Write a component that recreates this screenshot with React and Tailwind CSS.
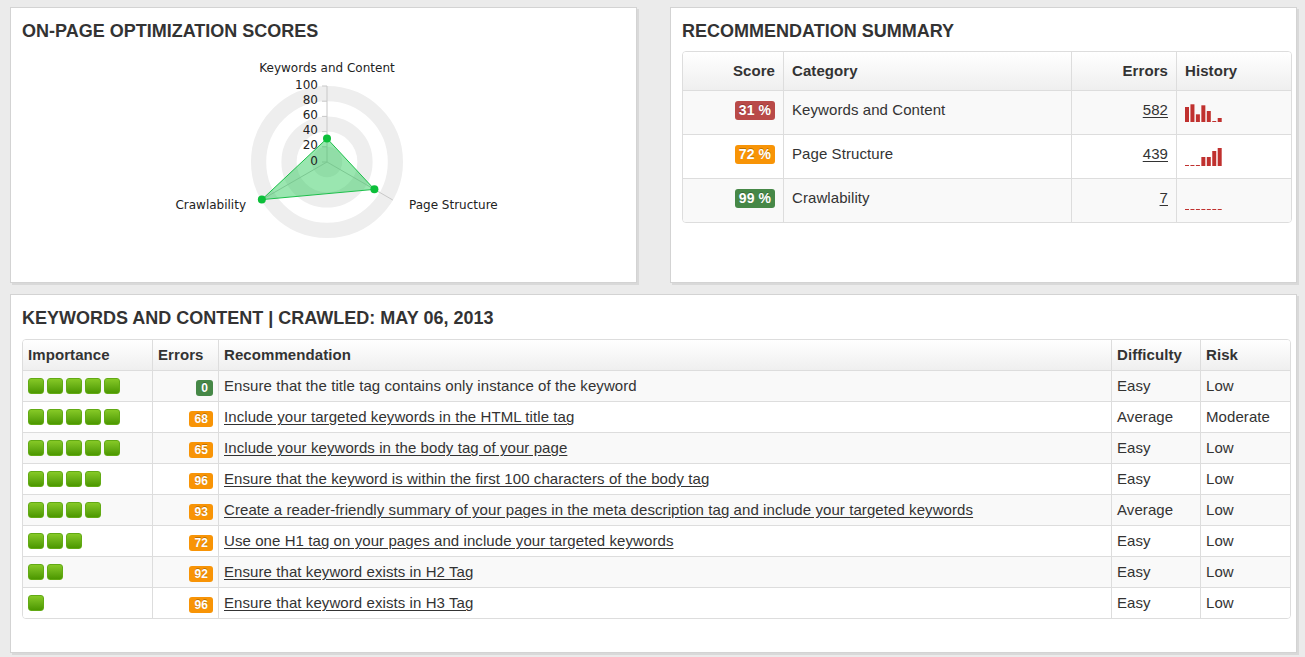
import React from 'react';

const summary = [
  { score: '31 %', badge: 'bg-[#b94a48]', category: 'Keywords and Content', errors: 582, history: [15, 17.7, 7.7, 16.7, 11, 1, 4] },
  { score: '72 %', badge: 'bg-[#f89406]', category: 'Page Structure', errors: 439, history: [1, 1, 1, 9, 9, 15, 18] },
  { score: '99 %', badge: 'bg-[#468847]', category: 'Crawlability', errors: 7, history: [1, 1, 1, 1, 1, 1, 1] },
];

const recommendations = [
  { importance: 5, errors: 0, text: 'Ensure that the title tag contains only instance of the keyword', link: false, difficulty: 'Easy', risk: 'Low' },
  { importance: 5, errors: 68, text: 'Include your targeted keywords in the HTML title tag', link: true, difficulty: 'Average', risk: 'Moderate' },
  { importance: 5, errors: 65, text: 'Include your keywords in the body tag of your page', link: true, difficulty: 'Easy', risk: 'Low' },
  { importance: 4, errors: 96, text: 'Ensure that the keyword is within the first 100 characters of the body tag', link: true, difficulty: 'Easy', risk: 'Low' },
  { importance: 4, errors: 93, text: 'Create a reader-friendly summary of your pages in the meta description tag and include your targeted keywords', link: true, difficulty: 'Average', risk: 'Low' },
  { importance: 3, errors: 72, text: 'Use one H1 tag on your pages and include your targeted keywords', link: true, difficulty: 'Easy', risk: 'Low' },
  { importance: 2, errors: 92, text: 'Ensure that keyword exists in H2 Tag', link: true, difficulty: 'Easy', risk: 'Low' },
  { importance: 1, errors: 96, text: 'Ensure that keyword exists in H3 Tag', link: true, difficulty: 'Easy', risk: 'Low' },
];

function Panel({ title, className, children }) {
  return (
    <div className={`bg-white border border-[#d3d3d3] shadow-[2px_2px_0_#d9d9d9] ${className}`}>
      <h2 className="px-[11px] pt-[13px] text-[18px] leading-[20px] font-bold text-[#333]">{title}</h2>
      {children}
    </div>
  );
}

function Radar() {
  const cx = 316, cy = 121, R = 76;
  const point = (v, deg) => {
    const r = (R * v) / 100;
    const a = (deg * Math.PI) / 180;
    return [cx + r * Math.sin(a), cy - r * Math.cos(a)];
  };
  const pts = [point(31, 0), point(72, 120), point(99, 240)];
  const ticks = [0, 20, 40, 60, 80, 100];
  const ends = [0, 120, 240].map((d) => point(100, d));

  return (
    <svg width="625" height="241" className="block">
      <circle cx={cx} cy={cy} r={R * 0.9} fill="none" stroke="#eeeeee" strokeWidth={R * 0.2} />
      <circle cx={cx} cy={cy} r={R * 0.5} fill="none" stroke="#eeeeee" strokeWidth={R * 0.2} />
      <circle cx={cx} cy={cy} r={R * 0.2} fill="#eeeeee" />
      {ends.map(([x, y], i) => (
        <line key={i} x1={cx} y1={cy} x2={x} y2={y} stroke="#c8c8c8" strokeWidth="1" />
      ))}
      {ticks.map((t) => {
        const y = cy - (R * t) / 100;
        return <line key={t} x1={cx - 5} y1={y} x2={cx} y2={y} stroke="#c8c8c8" strokeWidth="1" />;
      })}
      <polygon
        points={pts.map((p) => p.join(',')).join(' ')}
        fill="rgba(30,200,80,0.45)"
        stroke="#1cc04a"
        strokeWidth="1"
      />
      {pts.map(([x, y], i) => (
        <circle key={i} cx={x} cy={y} r="4" fill="#0cbf3a" />
      ))}
      <g fontFamily="'DejaVu Sans', Verdana, sans-serif" fontSize="12" fill="#222">
        {ticks.map((t) => (
          <text key={t} x={cx - 9} y={cy - (R * t) / 100 + 2.5} textAnchor="end">{t}</text>
        ))}
        <text x={cx} y="31" textAnchor="middle">Keywords and Content</text>
        <text x="235" y="168" textAnchor="end">Crawlability</text>
        <text x="398" y="168">Page Structure</text>
      </g>
    </svg>
  );
}

function Sparkline({ values }) {
  return (
    <svg width="38" height="20" className="block">
      {values.map((h, i) => (
        <rect key={i} x={i * 5.45} y={20 - h} width="4" height={h} fill="#c0312f" />
      ))}
    </svg>
  );
}

function Importance({ count }) {
  return (
    <div className="flex gap-[3px] -mt-[1px]">
      {Array.from({ length: count }).map((_, i) => (
        <span
          key={i}
          className="w-[16px] h-[16px] rounded-[3px] border border-[#62aa14] bg-linear-to-b from-[#86c926] to-[#4c9800]"
        />
      ))}
    </div>
  );
}

export default function App() {
  return (
    <div className="min-h-screen bg-[#ebebeb] pl-[10px] pt-[7px] text-[#333] font-['Liberation_Sans',Arial,sans-serif]">
      <div className="flex flex-col gap-[11px] w-[1287px]">
        <div className="flex gap-[33px]">
          {/* Scores radar */}
          <Panel title="ON-PAGE OPTIMIZATION SCORES" className="w-[627px] h-[276px]">
            <Radar />
          </Panel>

          {/* Recommendation summary */}
          <Panel title="RECOMMENDATION SUMMARY" className="w-[627px] h-[276px]">
            <div className="ml-[11px] mt-[10px] w-[610px] border border-[#ddd] rounded-[4px] overflow-hidden text-[15px] tracking-[0.08px]">
              <div className="grid grid-cols-[100px_288px_105px_115px] h-[38px] bg-linear-to-b from-white to-[#efefef] font-bold">
                <div className="flex items-center justify-end pr-[8px] pt-[1px]">Score</div>
                <div className="flex items-center pl-[8px] pt-[1px] border-l border-[#ddd]">Category</div>
                <div className="flex items-center justify-end pr-[8px] pt-[1px] border-l border-[#ddd]">Errors</div>
                <div className="flex items-center pl-[8px] pt-[1px] border-l border-[#ddd]">History</div>
              </div>
              {summary.map((row, i) => (
                <div
                  key={row.category}
                  className={`grid grid-cols-[100px_288px_105px_115px] h-[44px] border-t border-[#ddd] ${i % 2 === 0 ? 'bg-[#f9f9f9]' : 'bg-white'}`}
                >
                  <div className="flex justify-end items-start pr-[8px] pt-[10px]">
                    <span className={`${row.badge} text-white font-bold text-[14px] leading-[17px] py-[1px] px-[4px] rounded-[3px] [text-shadow:0_-1px_0_rgba(0,0,0,0.25)]`}>
                      {row.score}
                    </span>
                  </div>
                  <div className="pl-[8px] pt-[9px] leading-[20px] border-l border-[#ddd]">{row.category}</div>
                  <div className="pr-[8px] pt-[9px] leading-[20px] text-right border-l border-[#ddd]">
                    <a className="underline underline-offset-2">{row.errors}</a>
                  </div>
                  <div className="pl-[8px] pt-[11px] border-l border-[#ddd]">
                    <Sparkline values={row.history} />
                  </div>
                </div>
              ))}
            </div>
          </Panel>
        </div>

        {/* Keywords and content */}
        <Panel title="KEYWORDS AND CONTENT | CRAWLED: MAY 06, 2013" className="w-[1287px] h-[359px]">
          <div className="ml-[11px] mt-[11px] w-[1269px] border border-[#ddd] rounded-[4px] overflow-hidden text-[15px] tracking-[0.08px]">
            <div className="grid grid-cols-[129px_66px_893px_89px_90px] h-[30px] bg-linear-to-b from-white to-[#efefef] font-bold">
              <div className="flex items-center pl-[5px] pt-[1px]">Importance</div>
              <div className="flex items-center pl-[5px] pt-[1px] border-l border-[#ddd]">Errors</div>
              <div className="flex items-center pl-[5px] pt-[1px] border-l border-[#ddd]">Recommendation</div>
              <div className="flex items-center pl-[5px] pt-[1px] border-l border-[#ddd]">Difficulty</div>
              <div className="flex items-center pl-[5px] pt-[1px] border-l border-[#ddd]">Risk</div>
            </div>
            {recommendations.map((row, i) => (
              <div
                key={i}
                className={`grid grid-cols-[129px_66px_893px_89px_90px] h-[31px] border-t border-[#ddd] ${i % 2 === 0 ? 'bg-[#f9f9f9]' : 'bg-white'}`}
              >
                <div className="flex items-center pl-[5px]">
                  <Importance count={row.importance} />
                </div>
                <div className="flex items-center justify-end pr-[5px] border-l border-[#ddd]">
                  <span className={`${row.errors === 0 ? 'bg-[#468847]' : 'bg-[#f89406]'} mt-[3px] text-white font-bold text-[12px] leading-[14px] py-[1px] px-[5px] rounded-[3px] [text-shadow:0_-1px_0_rgba(0,0,0,0.25)]`}>
                    {row.errors}
                  </span>
                </div>
                <div className="flex items-center pl-[5px] pt-[1px] border-l border-[#ddd]">
                  {row.link ? <a className="underline underline-offset-2">{row.text}</a> : row.text}
                </div>
                <div className="flex items-center pl-[5px] pt-[1px] border-l border-[#ddd]">{row.difficulty}</div>
                <div className="flex items-center pl-[5px] pt-[1px] border-l border-[#ddd]">{row.risk}</div>
              </div>
            ))}
          </div>
        </Panel>
      </div>
    </div>
  );
}
